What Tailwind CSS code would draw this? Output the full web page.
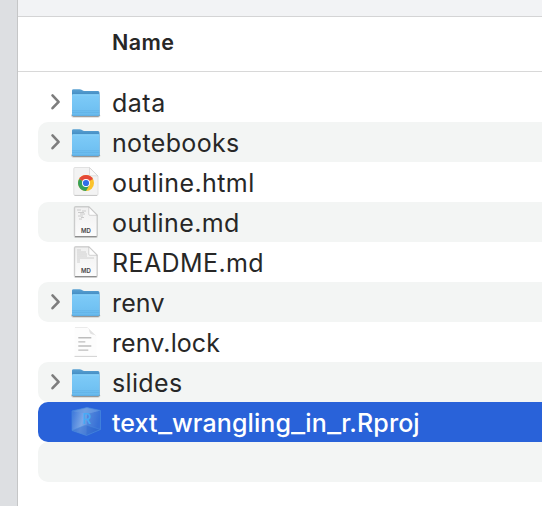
<!DOCTYPE html>
<html lang="en">
<head>
<meta charset="utf-8">
<title>Files</title>
<script src="https://cdn.jsdelivr.net/npm/@tailwindcss/browser@4"></script>
</head>
<body class="flex h-screen overflow-hidden bg-[#dddfe2] font-[Inter,sans-serif] text-[#272727]">
<svg width="0" height="0" class="absolute">
  <defs>
    <linearGradient id="fg" x1="0" y1="0" x2="0" y2="1"><stop offset="0" stop-color="#7ecbf8"/><stop offset="1" stop-color="#6bbdf0"/></linearGradient>
    <linearGradient id="fb" x1="0" y1="0" x2="0" y2="1"><stop offset="0" stop-color="#5aa2d3"/><stop offset=".3" stop-color="#3983bd"/></linearGradient>
    <linearGradient id="pg" x1="0" y1="0" x2="0" y2="1"><stop offset="0" stop-color="#f0f0f0"/><stop offset="1" stop-color="#fcfcfc"/></linearGradient>
    <linearGradient id="cg" x1="0" y1="0" x2="1" y2=".25"><stop offset="0" stop-color="#3772d9"/><stop offset=".45" stop-color="#7ba7e6"/><stop offset="1" stop-color="#3e77da"/></linearGradient>
    <symbol id="folder" viewBox="0 0 34 40">
      <path d="M2.9 33Q2.9 34.9 4.5 34.9H29Q30.6 34.9 30.6 33" fill="none" stroke="#000" stroke-opacity=".14" stroke-width="1.6"/>
      <path d="M3 32.5Q3 34.3 4.5 34.3H29Q30.5 34.3 30.5 32.5" fill="none" stroke="#000" stroke-opacity=".35" stroke-width="1"/>
      <path d="M3 8.5Q3 7.2 4.5 7.2H10.5Q12 7.2 13 8.1T15.5 9H29Q30.5 9 30.5 10.7V32.3Q30.5 33.8 29 33.8H4.5Q3 33.8 3 32.3Z" fill="url(#fb)"/>
      <path d="M3 13.3Q3 12.3 4.3 12.3H29.2Q30.5 12.3 30.5 13.3V32.3Q30.5 33.8 29 33.8H4.5Q3 33.8 3 32.3Z" fill="url(#fg)"/>
      <path d="M3.5 12.8H30" stroke="#98dcfb" stroke-width=".6"/>
      <path d="M3 28.8H30.5M3 30.6H30.5" stroke="#55a4db" stroke-opacity=".7" stroke-width=".6"/>
      <path d="M3.2 33.2H30.3" stroke="#5aaae0" stroke-width=".8"/>
    </symbol>
    <symbol id="webpage" viewBox="0 0 34 40">
      <path d="M6 5.5H20.5L29 14V32Q29 33.3 27.7 33.3H6Q4.8 33.3 4.8 32V6.7Q4.8 5.5 6 5.5Z" fill="#f3f3f3" stroke="#dadada" stroke-width=".8"/>
      <path d="M5.5 33.5H28.2" stroke="#c4c4c4" stroke-width=".9"/>
      <path d="M20.5 5.7V12.5Q20.5 13.8 21.8 13.8H28.8Z" fill="#fafafa" stroke="#cbcbcb" stroke-width=".6"/>
    </symbol>
    <symbol id="page" viewBox="0 0 34 40">
      <path d="M6.5 5H19.8L28 13.2V34Q28 35 27 35H6.5Q5.7 35 5.7 34V5.8Q5.7 5 6.5 5Z" fill="none" stroke="#000" stroke-opacity=".12" stroke-width="2"/>
      <path d="M6.5 5H19.8L28 13.2V33.5Q28 34.5 27 34.5H6.5Q5.7 34.5 5.7 33.5V5.8Q5.7 5 6.5 5Z" fill="url(#pg)" stroke="#bcbcbc" stroke-width=".7"/>
      <path d="M6 34.7H27.7" stroke="#808080" stroke-width="1"/>
      <path d="M19.8 5V12.3Q19.8 13.3 20.8 13.3H28Z" fill="#fdfdfd" stroke="#b8b8b8" stroke-width=".6"/>
    </symbol>
    <symbol id="chevron" viewBox="0 0 31 40">
      <path d="M13.3 13L19.4 19.4L13.3 25.8" transform="translate(.2 .4)" fill="none" stroke="#7d7d7d" stroke-width="2.6" stroke-linecap="round" stroke-linejoin="round"/>
    </symbol>
  </defs>
</svg>
<main class="ml-[17px] flex min-w-0 flex-1 flex-col border-l border-[#c5c6c7] bg-white">
  <div class="h-[17px] shrink-0 border-b border-[#d4d4d5] bg-[#f2f3f5]"></div>
  <header class="flex h-[55px] shrink-0 items-center border-b border-[#d8d8d8] pb-[4px] pl-[94px] text-[21.5px] font-semibold tracking-[0.4px]"><span>Name</span></header>
  <div class="mt-[10px] ml-[20px] text-[25px] leading-[42px] whitespace-nowrap">
    <div class="flex h-[40px] rounded-l-[10px]">
      <svg class="ml-[1px] h-[40px] w-[30px] overflow-visible" viewBox="0 0 30 40"><use href="#chevron" width="31" height="40"/></svg>
      <svg class="h-[40px] w-[34px]" viewBox="0 0 34 40"><use href="#folder" width="34" height="40"/></svg><span class="ml-[9px] tracking-[0.5px]">data</span>
    </div>
    <div class="flex h-[40px] rounded-l-[10px] bg-[#f3f5f4]">
      <svg class="ml-[1px] h-[40px] w-[30px] overflow-visible" viewBox="0 0 30 40"><use href="#chevron" width="31" height="40"/></svg>
      <svg class="h-[40px] w-[34px]" viewBox="0 0 34 40"><use href="#folder" width="34" height="40"/></svg><span class="ml-[9px] tracking-[0.35px]">notebooks</span>
    </div>
    <div class="flex h-[40px] rounded-l-[10px] pl-[31px]">
      <svg class="h-[40px] w-[34px]" viewBox="0 0 34 40"><use href="#webpage" width="34" height="40"/>
        <circle cx="17" cy="21" r="8" fill="#fbc32c"/>
        <path d="M17 21L10.1 17A8 8 0 0 1 24 17Z" fill="#e54838"/>
        <path d="M17 21L10.1 17A8 8 0 0 0 17 29L20.5 23Z" fill="#35a05a"/>
        <circle cx="17" cy="21" r="4" fill="white"/><circle cx="17" cy="21" r="3.1" fill="#306ee8"/>
      </svg><span class="ml-[9px] tracking-[0.43px]">outline.html</span>
    </div>
    <div class="flex h-[40px] rounded-l-[10px] bg-[#f3f5f4] pl-[31px]">
      <svg class="h-[40px] w-[34px]" viewBox="0 0 34 40"><use href="#page" width="34" height="40"/>
        <path d="M8 8H12M13 9H17M9 10.5H15M11 12H16M9 14H14M12 15.5H15M10 17H13" stroke="#c6c6c6" stroke-width=".9"/>
        <text x="17" y="31" text-anchor="middle" font-family="Inter" font-size="6" font-weight="600" fill="#444">MD</text>
      </svg><span class="ml-[9px] tracking-[0.4px]">outline.md</span>
    </div>
    <div class="flex h-[40px] rounded-l-[10px] pl-[31px]">
      <svg class="h-[40px] w-[34px]" viewBox="0 0 34 40"><use href="#page" width="34" height="40"/>
        <path d="M8 8H12M8 10H17M8 12H18M8 14H18M8 16H25M8 18H11M8 20H11" stroke="#cbcbcb" stroke-width=".9"/>
        <text x="17" y="31" text-anchor="middle" font-family="Inter" font-size="6" font-weight="600" fill="#444">MD</text>
      </svg><span class="ml-[9px] tracking-[0.4px]">README.md</span>
    </div>
    <div class="flex h-[40px] rounded-l-[10px] bg-[#f3f5f4]">
      <svg class="ml-[1px] h-[40px] w-[30px] overflow-visible" viewBox="0 0 30 40"><use href="#chevron" width="31" height="40"/></svg>
      <svg class="h-[40px] w-[34px]" viewBox="0 0 34 40"><use href="#folder" width="34" height="40"/></svg><span class="ml-[9px] tracking-[0.15px]">renv</span>
    </div>
    <div class="flex h-[40px] rounded-l-[10px] pl-[31px]">
      <svg class="h-[40px] w-[34px]" viewBox="0 0 34 40">
        <path d="M5.5 5.3H18.5L27.5 13.7V34.3H5.5Z" fill="#fdfdfd"/>
        <path d="M6 5.5H18.5" fill="none" stroke="#e2e2e2" stroke-width=".7"/>
        <path d="M18.5 5.5Q20.5 7 20.5 10Q21 12.3 23.5 12.4Q26 12.5 27.5 14Z" fill="#e2e2e2"/>
        <path d="M5.5 34.4H28" stroke="#cccccc" stroke-width=".9"/>
        <path d="M9.3 15.8H22.3M9.3 19.9H16.3M9.3 24H22.3M9.3 28.1H19.3" stroke="#bdbdbd" stroke-width="1.4"/>
      </svg><span class="ml-[9px] tracking-[0.1px]">renv.lock</span>
    </div>
    <div class="flex h-[40px] rounded-l-[10px] bg-[#f3f5f4]">
      <svg class="ml-[1px] h-[40px] w-[30px] overflow-visible" viewBox="0 0 30 40"><use href="#chevron" width="31" height="40"/></svg>
      <svg class="h-[40px] w-[34px]" viewBox="0 0 34 40"><use href="#folder" width="34" height="40"/></svg><span class="ml-[9px] tracking-[0.35px]">slides</span>
    </div>
    <div class="flex h-[40px] rounded-l-[10px] bg-[#2962d9] pl-[31px] font-medium text-white">
      <svg class="h-[40px] w-[34px]" viewBox="0 0 34 40">
        <path d="M3 9L18 5.5L31.5 8.5V27.5L17.5 33.5L3 28.5Z" fill="url(#cg)"/>
        <path d="M18 12L31.5 8.5V27.5L17.5 33.5Z" fill="#2b65cf" opacity=".35"/>
        <path d="M3 28.5L17 23L31.5 27.5L17.5 33.5Z" fill="#2961ca" opacity=".45"/>
        <path d="M3 9L18 12L31.5 8.5L18 5.5Z" fill="#6799e0" opacity=".6"/>
        <path d="M3 9L18 5.5L31.5 8.5V27.5L17.5 33.5L3 28.5Z" fill="none" stroke="#4688dc" stroke-width=".7"/>
        <path d="M3 28.5L17 23L31.5 27.5" fill="none" stroke="#4b8add" stroke-width=".5"/>
        <text x="13" y="21.7" font-family="Inter" font-size="14.5" fill="#48aaf5">R</text>
      </svg><span class="ml-[9px] tracking-[0.1px]">text<span class="mr-[2.6px] inline-block origin-left scale-x-[1.22]">_</span>wrangling<span class="mr-[2.6px] inline-block origin-left scale-x-[1.22]">_</span>in<span class="mr-[2.6px] inline-block origin-left scale-x-[1.22]">_</span>r.Rproj</span>
    </div>
    <div class="h-[40px] rounded-l-[10px] bg-[#f3f5f4]"></div>
  </div>
</main>
</body>
</html>
